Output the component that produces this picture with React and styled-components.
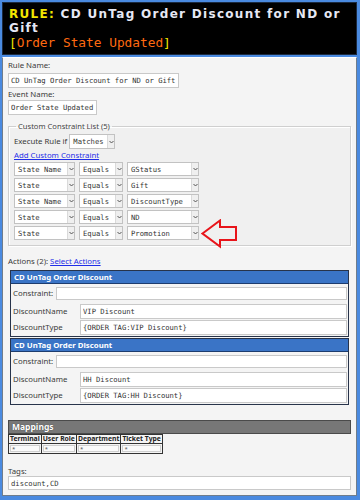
import styled, { createGlobalStyle } from "styled-components";

const GlobalStyle = createGlobalStyle`
  html, body { margin: 0; padding: 0; background: #4a8ae0; }
  * { box-sizing: border-box; }
`;

const Window = styled.div`
  width: 360px;
  height: 500px;
  background: #4a8ae0;
  padding: 2px 3px 4px 2px;
  display: flex;
  flex-direction: column;
  gap: 2px;
  overflow: hidden;
`;

const Header = styled.header`
  flex: none;
  background: #000;
  border: 1px solid #1b2a40;
  padding: 4px 6px 0 6px;
  height: 53px;
  font-family: "DejaVu Sans", Verdana, sans-serif;
`;

const Title = styled.h1`
  margin: 0;
  font-size: 12px;
  line-height: 14px;
  letter-spacing: 1.3px;
  font-weight: bold;
  color: #e6e8f4;
`;

const TitleLine = styled.span`
  display: block;
  height: 14px;
  white-space: nowrap;
`;

const RuleWord = styled.span`
  color: #f2e600;
`;

const EventLine = styled.div`
  font-family: "DejaVu Sans Mono", "Liberation Mono", monospace;
  font-size: 12.8px;
  line-height: 15px;
  color: #ff6a10;
`;

const Bracket = styled.span`
  color: #f2e600;
`;

const Panel = styled.main`
  flex: 1;
  min-height: 0;
  background: #f4f4f4;
  border: 1px solid #6f7d8c;
  border-top-color: #ffffff;
  padding: 2px 5px 0 5px;
  display: flex;
  flex-direction: column;
  font-family: "Noto Sans", "Open Sans", sans-serif;
  color: #3a3a3a;
  overflow: hidden;
`;

const Label = styled.div`
  font-size: 7.8px;
  line-height: ${(p) => p.$line || 11}px;
  margin-top: ${(p) => p.$top || 0}px;
  flex: none;
`;

const TextBox = styled.input`
  display: block;
  width: ${(p) => (p.$width ? `${p.$width}px` : "100%")};
  height: ${(p) => p.$height || 15}px;
  margin: ${(p) => p.$top || 0}px 0 0 0;
  padding: 0 2px;
  border: 1px solid #c9c9c9;
  background: #fff;
  font-family: "DejaVu Sans Mono", "Liberation Mono", monospace;
  font-size: 7.2px;
  color: #333;
  outline: none;
  flex: ${(p) => (p.$grow ? 1 : "none")};
  min-width: 0;
`;

const Fieldset = styled.fieldset`
  flex: none;
  margin: 6px 0 0 0;
  padding: 2px 5px 5px 5px;
  border: 1px solid #cfcfcf;
  box-shadow: inset 1px 1px 0 #ffffff, 1px 1px 0 #ffffff;
  background: #f0f0f0;
  display: flex;
  flex-direction: column;
`;

const Legend = styled.legend`
  font-size: 7.6px;
  line-height: 10px;
  padding: 0 2px;
  margin-left: 2px;
  color: #444;
`;

const InlineRow = styled.div`
  display: flex;
  align-items: center;
  gap: ${(p) => p.$gap || 3}px;
  position: relative;
  margin-top: ${(p) => p.$top || 0}px;
`;

const InlineLabel = styled.span`
  font-size: 7.8px;
  line-height: 11px;
  width: ${(p) => (p.$width ? `${p.$width}px` : "auto")};
  flex: none;
`;

const SelectBox = styled.div`
  width: ${(p) => p.$width}px;
  height: ${(p) => p.$height || 14}px;
  border: 1px solid #c2c2c2;
  background: #fff;
  display: flex;
  align-items: stretch;
  flex: none;
`;

const SelectText = styled.span`
  flex: 1;
  padding-left: 3px;
  display: flex;
  align-items: center;
  font-family: "DejaVu Sans Mono", "Liberation Mono", monospace;
  font-size: 7.2px;
  color: #333;
  white-space: nowrap;
  overflow: hidden;
`;

const SelectArrow = styled.span`
  width: 7px;
  background: #efefef;
  border-left: 1px solid #dadada;
  display: flex;
  align-items: center;
  justify-content: center;
`;

const Link = styled.a`
  font-size: 7.8px;
  line-height: 11px;
  color: #1f2ee8;
  text-decoration: underline;
`;

const ConstraintList = styled.div`
  display: flex;
  flex-direction: column;
  gap: 2px;
  margin-top: 1px;
`;

const Callout = styled.svg`
  position: absolute;
  left: 187px;
  top: -7px;
`;

const ActionsLine = styled.div`
  flex: none;
  font-size: 7.8px;
  line-height: 11px;
  margin-top: 10px;
`;

const ActionBox = styled.section`
  flex: none;
  margin: ${(p) => p.$top || 0}px 2px 0 2px;
  border: 1px solid #27334a;
  background: #f4f4f4;
`;

const ActionTitle = styled.div`
  height: 13px;
  background: #3a74c6;
  border-bottom: 1px solid #1d3c6e;
  color: #fff;
  font-weight: bold;
  font-size: 7.8px;
  line-height: 12px;
  padding-left: 3px;
`;

const ActionBody = styled.div`
  padding: 3px 1px 1px 2px;
  display: flex;
  flex-direction: column;
  gap: 1px;
`;

const MappingsTitle = styled.div`
  flex: none;
  margin-top: 15px;
  height: 14px;
  background: #777777;
  border: 1px solid #4a4a4a;
  color: #fff;
  font-weight: bold;
  font-size: 8.5px;
  line-height: 12px;
  padding-left: 3px;
  text-shadow: 0 0 1px #333;
`;

const MapTable = styled.table`
  flex: none;
  border-collapse: collapse;
  border: 1px solid #333;
  font-size: 6.8px;
  align-self: flex-start;
`;

const HeadCell = styled.th`
  border: 1px solid #333;
  padding: 0 1px;
  height: 9px;
  line-height: 8px;
  font-weight: bold;
  color: #222;
  text-align: left;
  white-space: nowrap;
`;

const DataCell = styled.td`
  border: 1px solid #333;
  padding: 1px;
  height: 10px;
`;

const CellValue = styled.div`
  border: 1px solid #cfcfcf;
  background: #fafafa;
  height: 7px;
  font-size: 6px;
  line-height: 6px;
  padding-left: 1px;
  color: #555;
`;

const Chevron = () => (
  <svg width="5" height="4" viewBox="0 0 5 4">
    <path d="M0.5 1 L2.5 3 L4.5 1" fill="none" stroke="#555" strokeWidth="1" />
  </svg>
);

const Select = ({ width, value, height }) => (
  <SelectBox $width={width} $height={height}>
    <SelectText>{value}</SelectText>
    <SelectArrow>
      <Chevron />
    </SelectArrow>
  </SelectBox>
);

const constraints = [
  ["State Name", "GStatus"],
  ["State", "Gift"],
  ["State Name", "DiscountType"],
  ["State", "ND"],
  ["State", "Promotion"],
];

const actions = [
  { name: "VIP Discount", type: "{ORDER TAG:VIP Discount}" },
  { name: "HH Discount", type: "{ORDER TAG:HH Discount}" },
];

const Action = ({ name, type, top }) => (
  <ActionBox $top={top}>
    <ActionTitle>CD UnTag Order Discount</ActionTitle>
    <ActionBody>
      <InlineRow $gap={3}>
        <InlineLabel>Constraint:</InlineLabel>
        <TextBox readOnly defaultValue="" $grow $height={13} />
      </InlineRow>
      <InlineRow $gap={0} $top={3}>
        <InlineLabel $width={64}>DiscountName</InlineLabel>
        <TextBox readOnly defaultValue={name} $grow $height={15} />
      </InlineRow>
      <InlineRow $gap={0}>
        <InlineLabel $width={64}>DiscountType</InlineLabel>
        <TextBox readOnly defaultValue={type} $grow $height={15} />
      </InlineRow>
    </ActionBody>
  </ActionBox>
);

export default function App() {
  return (
    <>
      <GlobalStyle />
      <Window>
        <Header>
          <Title>
            <TitleLine>
              <RuleWord>RULE:</RuleWord> CD UnTag Order Discount for ND or
            </TitleLine>
            <TitleLine>Gift</TitleLine>
          </Title>
          <EventLine>
            <Bracket>[</Bracket>Order State Updated<Bracket>]</Bracket>
          </EventLine>
        </Header>
        <Panel>
          <Label>Rule Name:</Label>
          <TextBox readOnly defaultValue="CD UnTag Order Discount for ND or Gift" $width={171} $top={2} />
          <Label $top={1}>Event Name:</Label>
          <TextBox readOnly defaultValue="Order State Updated" $width={89} />
          <Fieldset>
            <Legend>Custom Constraint List (5)</Legend>
            <InlineRow $gap={2} $top={1}>
              <InlineLabel>Execute Rule if</InlineLabel>
              <Select width={46} height={15} value="Matches" />
            </InlineRow>
            <InlineRow $top={1}>
              <Link href="#">Add Custom Constraint</Link>
            </InlineRow>
            <ConstraintList>
              {constraints.map(([field, value], i) => (
                <InlineRow key={i} $gap={4}>
                  <Select width={61} value={field} />
                  <Select width={44} value="Equals" />
                  <Select width={72} value={value} />
                  {i === constraints.length - 1 && (
                    <Callout width="38" height="30" viewBox="0 0 38 30">
                      <path
                        d="M1.5 14.5 L19 1.5 L19 8 L35 8 L35 21 L19 21 L19 27.5 Z"
                        fill="none"
                        stroke="#e8141a"
                        strokeWidth="2"
                        strokeLinejoin="miter"
                      />
                    </Callout>
                  )}
                </InlineRow>
              ))}
            </ConstraintList>
          </Fieldset>
          <ActionsLine>
            Actions (2): <Link href="#">Select Actions</Link>
          </ActionsLine>
          {actions.map((a, i) => (
            <Action key={i} name={a.name} type={a.type} top={i === 0 ? 3 : 1} />
          ))}
          <MappingsTitle>Mappings</MappingsTitle>
          <MapTable>
            <thead>
              <tr>
                <HeadCell>Terminal</HeadCell>
                <HeadCell>User Role</HeadCell>
                <HeadCell>Department</HeadCell>
                <HeadCell>Ticket Type</HeadCell>
              </tr>
            </thead>
            <tbody>
              <tr>
                {[0, 1, 2, 3].map((c) => (
                  <DataCell key={c}>
                    <CellValue>*</CellValue>
                  </DataCell>
                ))}
              </tr>
            </tbody>
          </MapTable>
          <Label $top={12} $line={10}>Tags:</Label>
          <TextBox readOnly defaultValue="discount,CD" $height={14} />
        </Panel>
      </Window>
    </>
  );
}
